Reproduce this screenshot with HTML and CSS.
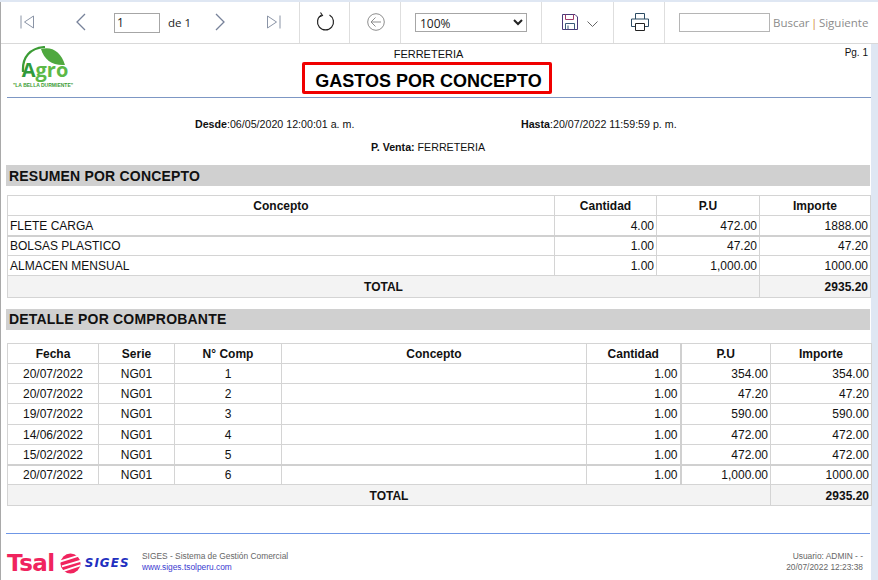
FILE: index.html
```html
<!DOCTYPE html>
<html lang="en">
<head>
    <meta charset="UTF-8">
    <meta name="viewport" content="width=device-width, initial-scale=1.0">
    <title>Gastos por concepto</title>
    <link rel="stylesheet" href="styles.css">
</head>
<body>
    <div class="viewer">
        <!-- Toolbar -->
        <div class="toolbar">
            <div class="tool-group paging">
                <svg class="icon first" width="14" height="14" viewBox="0 0 14 14"><path d="M1 .5v13M13.500 1 4.500 7l9 6z" fill="none" stroke="#8a94a6"/></svg>
                <svg class="icon prev" width="11" height="18" viewBox="0 0 11 18"><path d="M10 1 2 9l8 8" fill="none" stroke="#77829a" stroke-width="1.300"/></svg>
                <input class="page-input" type="text" value="1">
                <span class="page-total">de 1</span>
                <svg class="icon next" width="11" height="18" viewBox="0 0 11 18"><path d="m1 1 8 8-8 8" fill="none" stroke="#77829a" stroke-width="1.300"/></svg>
                <svg class="icon last" width="14" height="14" viewBox="0 0 14 14"><path d="M13 .5v13M.5 1l9 6-9 6z" fill="none" stroke="#8a94a6"/></svg>
            </div>
            <div class="tool-group refresh">
                <svg class="icon" width="19" height="19" viewBox="0 0 19 19"><path d="M5.500 3a8 8 0 1 0 8 0" fill="none" stroke="#222" stroke-width="1.200"/><path d="M4.500 .5 6.500 3.500 3 5" fill="none" stroke="#222" stroke-width="1.100"/></svg>
            </div>
            <div class="tool-group back">
                <svg class="icon" width="18" height="18" viewBox="0 0 18 18"><circle cx="9" cy="9" r="8.300" fill="none" stroke="#8d8d8d"/><path d="M14 9H4M8.500 4.500 4 9l4.500 4.500" fill="none" stroke="#8d8d8d"/></svg>
            </div>
            <div class="tool-group zoom">
                <select class="zoom-select"><option>100%</option></select>
            </div>
            <div class="tool-group save">
                <svg class="icon" width="16" height="16" viewBox="0 0 16 16"><path d="M.5.500h12.500l2.500 2.500v12.500H.5z" fill="#fff" stroke="#4b3a78"/><path d="M3.500.500v5h8v-5" fill="none" stroke="#a03a6a"/><path d="M3.500 15.500v-6h9v6M6 11.500v4" fill="none" stroke="#3a5a7a"/></svg>
                <svg class="chevron" width="11" height="7" viewBox="0 0 11 7"><path d="m.5.500 5 5 5-5" fill="none" stroke="#666"/></svg>
            </div>
            <div class="tool-group print">
                <svg class="icon" width="18" height="18" viewBox="0 0 18 18"><path d="M4.500 6V.500h9V6M4.500 13.500H.5V6h17v7.500h-4" fill="#fff" stroke="#2b4a63"/><path d="M4.500 10.500h9v7h-9z" fill="#fff" stroke="#222"/></svg>
            </div>
            <div class="tool-group search">
                <input class="search-input" type="text">
                <span class="search-links">Buscar <span class="search-sep">|</span> Siguiente</span>
            </div>
        </div>

        <!-- Report page -->
        <div class="report">
            <div class="report-header">
                <div class="logo">
                    <svg class="logo-leaf" width="46" height="28" viewBox="0 0 46 28"><path d="M2 26C1 11 9 2 24 1" fill="none" stroke="#3c9c35" stroke-width="2.200"/><path d="M20 3C31 0 40 6 44 19 32 20 23 14 20 3z" fill="#4fa83f"/></svg>
                    <span class="logo-name"><span class="logo-a">A</span>gro</span>
                    <span class="logo-tag">"LA BELLA DURMIENTE"</span>
                </div>
                <div class="report-titles">
                    <div class="company">FERRETERIA</div>
                    <h1 class="report-title">GASTOS POR CONCEPTO</h1>
                </div>
                <div class="page-number">Pg. 1</div>
            </div>

            <div class="filters">
                <div class="filter-dates">
                    <span class="filter-from"><b>Desde</b>:06/05/2020 12:00:01 a. m.</span>
                    <span class="filter-to"><b>Hasta</b>:20/07/2022 11:59:59 p. m.</span>
                </div>
                <div class="filter-store"><b>P. Venta:</b> FERRETERIA</div>
            </div>

            <h2 class="band band-summary">RESUMEN POR CONCEPTO</h2>
            <table class="grid summary">
                <colgroup>
                    <col class="s1"><col class="s2"><col class="s3"><col class="s4">
                </colgroup>
                <thead>
                    <tr><th>Concepto</th><th>Cantidad</th><th>P.U</th><th>Importe</th></tr>
                </thead>
                <tbody>
                    <tr class="thick"><td>FLETE CARGA</td><td class="num">4.00</td><td class="num">472.00</td><td class="num">1888.00</td></tr>
                    <tr><td>BOLSAS PLASTICO</td><td class="num">1.00</td><td class="num">47.20</td><td class="num">47.20</td></tr>
                    <tr><td>ALMACEN MENSUAL</td><td class="num">1.00</td><td class="num">1,000.00</td><td class="num">1000.00</td></tr>
                    <tr class="total"><td colspan="3">TOTAL</td><td class="num">2935.20</td></tr>
                </tbody>
            </table>

            <h2 class="band band-detail">DETALLE POR COMPROBANTE</h2>
            <table class="grid detail">
                <colgroup>
                    <col class="d1"><col class="d2"><col class="d3"><col class="d4"><col class="d5"><col class="d6"><col class="d7">
                </colgroup>
                <thead>
                    <tr><th>Fecha</th><th>Serie</th><th>N° Comp</th><th>Concepto</th><th>Cantidad</th><th class="wall">P.U</th><th>Importe</th></tr>
                </thead>
                <tbody>
                    <tr><td class="mid">20/07/2022</td><td class="mid">NG01</td><td class="mid">1</td><td></td><td class="num">1.00</td><td class="num wall">354.00</td><td class="num">354.00</td></tr>
                    <tr><td class="mid">20/07/2022</td><td class="mid">NG01</td><td class="mid">2</td><td></td><td class="num">1.00</td><td class="num wall">47.20</td><td class="num">47.20</td></tr>
                    <tr class="tall"><td class="mid">19/07/2022</td><td class="mid">NG01</td><td class="mid">3</td><td></td><td class="num">1.00</td><td class="num wall">590.00</td><td class="num">590.00</td></tr>
                    <tr><td class="mid">14/06/2022</td><td class="mid">NG01</td><td class="mid">4</td><td></td><td class="num">1.00</td><td class="num wall">472.00</td><td class="num">472.00</td></tr>
                    <tr class="thick"><td class="mid">15/02/2022</td><td class="mid">NG01</td><td class="mid">5</td><td></td><td class="num">1.00</td><td class="num wall">472.00</td><td class="num">472.00</td></tr>
                    <tr><td class="mid">20/07/2022</td><td class="mid">NG01</td><td class="mid">6</td><td></td><td class="num">1.00</td><td class="num wall">1,000.00</td><td class="num">1000.00</td></tr>
                    <tr class="total"><td colspan="6">TOTAL</td><td class="num">2935.20</td></tr>
                </tbody>
            </table>

            <div class="report-footer">
                <div class="brand">
                    <span class="brand-tsal">Tsal</span>
                    <svg class="brand-mark" width="21" height="21" viewBox="0 0 22 22"><circle cx="11" cy="11" r="10.500" fill="#f0245e"/><path d="M0 9 19 3M2 14 22 8M3 19 21 13" stroke="#fff" stroke-width="2" fill="none"/></svg>
                    <span class="brand-siges">SIGES</span>
                </div>
                <div class="footer-info">
                    <div>SIGES - Sistema de Gestión Comercial</div>
                    <div class="footer-link">www.siges.tsolperu.com</div>
                </div>
                <div class="footer-user">
                    <div>Usuario: ADMIN - -</div>
                    <div>20/07/2022 12:23:38</div>
                </div>
            </div>
        </div>
    </div>
</body>
</html>
```

FILE: styles.css
```css
html, body {
    margin: 0;
    padding: 0;
    height: 100%;
    overflow: hidden;
}

body {
    font-family: "Liberation Sans", Arial, sans-serif;
    font-size: 12px;
    color: #111;
    background-color: #dfe7f3; /* Light blue frame around the viewer */
}

.viewer {
    width: 871px;
    height: 578px;
    margin-top: 2px;
    background-color: #fff;
    border-left: 1px solid #a9a9a9;
    box-sizing: border-box;
}

/* Toolbar */
.toolbar {
    display: flex;
    height: 42px;
    width: 877px;
    box-sizing: border-box;
    background-color: #fff;
    border-bottom: 1px solid #d9d9d9;
}

.tool-group {
    display: flex;
    align-items: center;
    box-sizing: border-box;
    border-right: 1px solid #dedede;
    height: 41px;
}

.icon {
    margin-bottom: 2px;
}

.paging {
    width: 299px;
    padding-left: 19px;
}

.icon.first { margin-right: 41px; }
.icon.prev { margin-right: 28px; }
.icon.next { margin-left: 24px; margin-right: 41px; }

.page-input {
    width: 46px;
    height: 20px;
    box-sizing: border-box;
    border: 1px solid #a6a6a6;
    padding: 0 2px;
    font-family: "Open Sans", sans-serif;
    font-size: 12px;
    color: #222;
}

.page-total {
    margin-left: 8px;
    font-family: "Open Sans", sans-serif;
    font-size: 11.500px;
    color: #222;
}

.refresh {
    width: 50px;
    padding-left: 16px;
}

.back {
    width: 51px;
    padding-left: 17px;
}

.zoom {
    width: 141px;
    padding-left: 14px;
}

.zoom-select {
    width: 112px;
    height: 19px;
    border: 1px solid #a6a6a6;
    border-radius: 0;
    background-color: #fff;
    font-family: "Open Sans", sans-serif;
    font-size: 12px;
    color: #222;
}

.save {
    width: 72px;
    padding-left: 20px;
}

.chevron {
    margin-left: 9px;
    margin-top: 3px;
}

.print {
    width: 51px;
    padding-left: 17px;
}

.search {
    border-right: none;
    padding-left: 14px;
}

.search-input {
    width: 91px;
    height: 19px;
    box-sizing: border-box;
    border: 1px solid #b5b5b5;
}

.search-links {
    margin-left: 3px;
    font-family: "Open Sans", sans-serif;
    font-size: 11.500px;
    word-spacing: -1.500px;
    color: #8c8c8c;
    white-space: nowrap;
}

.search-sep {
    color: #d08a3c;
}

/* Report */
.report {
    padding: 0 0 0 5px;
    width: 865px;
}

.report-header {
    display: flex;
    height: 53px;
    border-bottom: 1px solid #7d97c4;
    margin-left: 1px;
}

.logo {
    display: flex;
    flex-direction: column;
    align-items: center;
    position: relative;
    width: 64px;
    margin-left: 6px;
    padding-top: 3px;
    box-sizing: border-box;
}

.logo-leaf {
    position: absolute;
    top: 2px;
    left: 8px;
}

.logo-name {
    position: relative;
    margin-top: 11px;
    font-family: "Open Sans", sans-serif;
    font-size: 20px;
    font-weight: 700;
    line-height: 24px;
    color: #5cb947;
}

.logo-a {
    color: #2f9a3c;
}

.logo-tag {
    margin-left: -4px;
    font-size: 5px;
    font-weight: 700;
    color: #3c9c35;
    white-space: nowrap;
    line-height: 6px;
}

.report-titles {
    width: 700px;
    display: flex;
    flex-direction: column;
    align-items: center;
}

.company {
    padding-left: 3px;
    font-size: 11px;
    line-height: 13px;
    margin-top: 4px;
}

.report-title {
    width: 250px;
    height: 32px;
    margin: 1px 0 0;
    padding: 3px 0 0 3px;
    box-sizing: border-box;
    border: 3px solid #f00000;
    border-radius: 2px;
    font-size: 18px;
    line-height: 26px;
    text-align: center;
    color: #000;
}

.page-number {
    flex: 1;
    padding-top: 3px;
    padding-right: 3px;
    box-sizing: border-box;
    text-align: right;
    font-size: 10px;
    line-height: 11px;
}

.filters {
    font-size: 10.670px;
    height: 67px;
}

.filter-dates {
    display: flex;
    padding-top: 20px;
    padding-left: 189px;
    line-height: 13px;
}

.filter-from {
    width: 326px;
}

.filter-store {
    margin-top: 10px;
    padding-left: 365px;
    line-height: 13px;
}

.band {
    height: 21px;
    margin: 0 0 9px;
    padding-left: 3px;
    width: 864px;
    box-sizing: border-box;
    background-color: #d0d0d0;
    font-size: 14px;
    line-height: 21px;
    letter-spacing: .2px;
    color: #111;
}

.band-summary {
    line-height: 23px;
}

.band-detail {
    margin-top: 11px;
    margin-bottom: 13px;
}

/* Tables */
.grid {
    border-collapse: collapse;
    table-layout: fixed;
    margin-left: 1px;
    font-size: 12px;
}

.grid th, .grid td {
    height: 20px;
    padding: 0 2px;
    box-sizing: border-box;
    border: 1px solid #d4d4d4;
    overflow: hidden;
    white-space: nowrap;
}

.grid th {
    font-weight: 700;
    text-align: center;
}

.grid .num {
    text-align: right;
}

.grid .mid {
    text-align: center;
}

.grid .thick td {
    padding-top: 1px;
    border-bottom: 2px solid #d0d0d0;
}

.grid .tall td {
    height: 21px;
}

.grid .wall {
    border-left: 2px solid #d0d0d0;
}

.grid .total td {
    padding-top: 1px;
    background-color: #f3f3f3;
    font-weight: 700;
    text-align: center;
    height: 21px;
}

.summary .total td {
    height: 22px;
}

.grid .total .num {
    text-align: right;
}

.summary { width: 863px; }
.s1 { width: 547px; }
.s2 { width: 102px; }
.s3 { width: 103px; }
.s4 { width: 111px; }

.detail { width: 864px; }
.d1 { width: 91px; }
.d2 { width: 76px; }
.d3 { width: 107px; }
.d4 { width: 305px; }
.d5 { width: 94px; }
.d6 { width: 90px; }
.d7 { width: 101px; }

/* Footer */
.report-footer {
    display: flex;
    width: 864px;
    height: 46px;
    box-sizing: border-box;
    margin-top: 27px;
    border-top: 1px solid #6f97e6;
    padding-top: 17px;
    font-size: 8.400px;
    color: #666;
    line-height: 11px;
}

.brand {
    display: flex;
    align-items: center;
    flex-shrink: 0;
    height: 24px;
    width: 136px;
    padding-left: 1px;
    box-sizing: border-box;
}

.brand-tsal {
    font-family: "DejaVu Sans", sans-serif;
    font-size: 23px;
    font-weight: 700;
    letter-spacing: -.5px;
    line-height: 24px;
    color: #f0245e;
}

.brand-mark {
    margin-left: 5px;
}

.brand-siges {
    margin-left: 4px;
    font-family: "DejaVu Sans", sans-serif;
    font-size: 12px;
    font-weight: 700;
    font-style: italic;
    letter-spacing: 1px;
    color: #1f2fc0;
}

.footer-link {
    color: #3b3bd0;
}

.footer-info {
    flex: 1;
}

.footer-user {
    text-align: right;
    padding-right: 7px;
}
```
